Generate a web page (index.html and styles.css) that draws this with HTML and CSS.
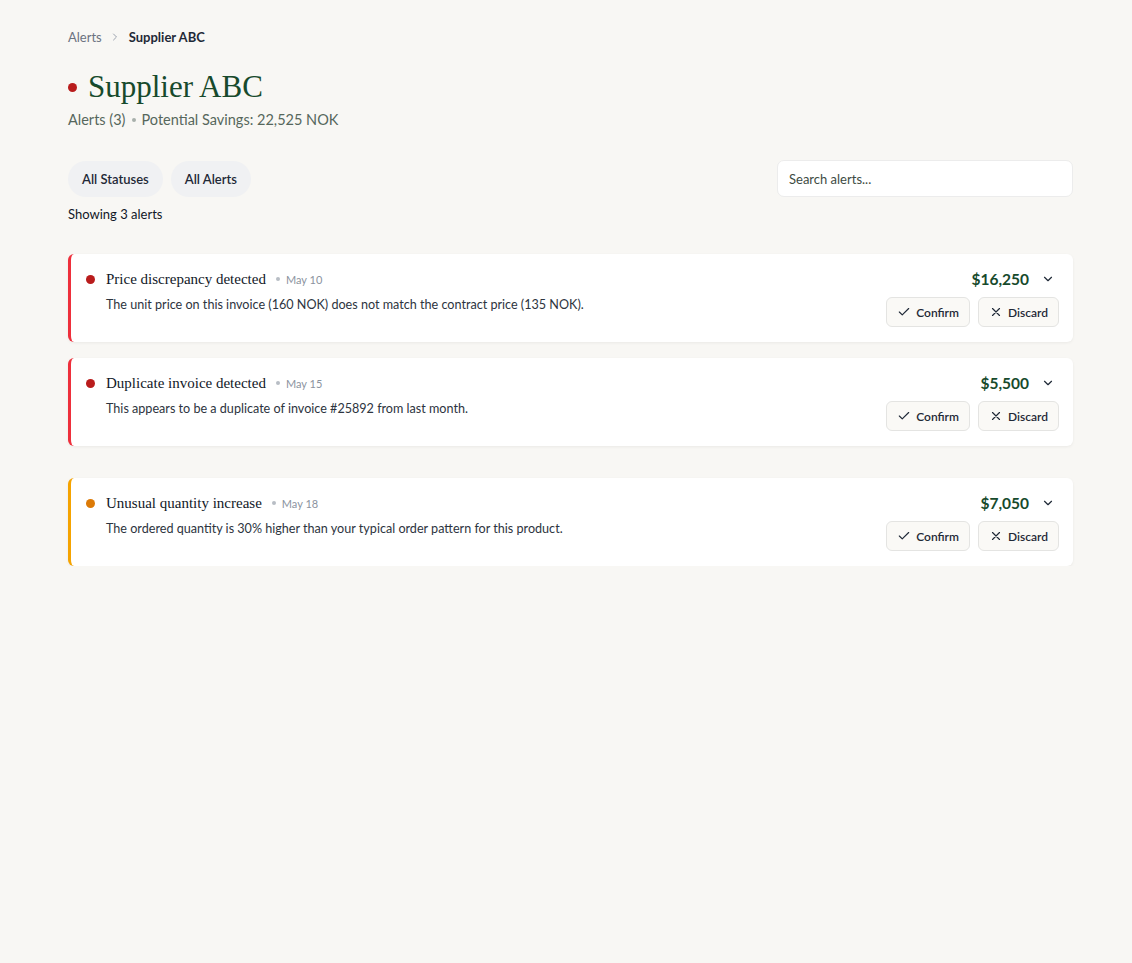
FILE: index.html
```html
<!DOCTYPE html>
<html>
<head>
<meta charset="utf-8">
<link rel="stylesheet" href="styles.css">
</head>
<body>
<div class="page">
  <nav class="crumbs">
    <span class="crumb-link">Alerts</span>
    <svg class="crumb-sep" width="12" height="12" viewBox="0 0 24 24" fill="none" stroke="currentColor" stroke-width="2" stroke-linecap="round" stroke-linejoin="round"><path d="M9 6l6 6-6 6"/></svg>
    <span class="crumb-current">Supplier ABC</span>
  </nav>

  <header class="head">
    <h1 class="title"><span class="title-dot"></span>Supplier ABC</h1>
    <p class="sub">Alerts (3) <span class="sep-dot"></span> Potential Savings: 22,525 NOK</p>
  </header>

  <div class="toolbar">
    <div class="filters">
      <button class="pill">All Statuses</button>
      <button class="pill">All Alerts</button>
    </div>
    <input class="search" type="text" placeholder="Search alerts...">
  </div>
  <p class="count">Showing 3 alerts</p>

  <div class="group">
    <div class="card card-red">
      <div class="card-main">
        <div class="card-top"><span class="dot dot-red"></span><span class="card-title">Price discrepancy detected</span><span class="meta"><span class="meta-dot"></span>May 10</span></div>
        <p class="desc">The unit price on this invoice (160 NOK) does not match the contract price (135 NOK).</p>
      </div>
      <div class="card-side">
        <div class="amount-row"><span class="amount">$16,250</span><svg class="chev" width="14" height="14" viewBox="0 0 24 24" fill="none" stroke="currentColor" stroke-width="2" stroke-linecap="round" stroke-linejoin="round"><path d="M6 9l6 6 6-6"/></svg></div>
        <div class="actions">
          <button class="btn"><svg width="14" height="14" viewBox="0 0 24 24" fill="none" stroke="currentColor" stroke-width="2" stroke-linecap="round" stroke-linejoin="round"><path d="M20 6L9 17l-5-5"/></svg>Confirm</button>
          <button class="btn"><svg width="14" height="14" viewBox="0 0 24 24" fill="none" stroke="currentColor" stroke-width="2" stroke-linecap="round" stroke-linejoin="round"><path d="M18 6L6 18M6 6l12 12"/></svg>Discard</button>
        </div>
      </div>
    </div>
    <div class="card card-red">
      <div class="card-main">
        <div class="card-top"><span class="dot dot-red"></span><span class="card-title">Duplicate invoice detected</span><span class="meta"><span class="meta-dot"></span>May 15</span></div>
        <p class="desc">This appears to be a duplicate of invoice #25892 from last month.</p>
      </div>
      <div class="card-side">
        <div class="amount-row"><span class="amount">$5,500</span><svg class="chev" width="14" height="14" viewBox="0 0 24 24" fill="none" stroke="currentColor" stroke-width="2" stroke-linecap="round" stroke-linejoin="round"><path d="M6 9l6 6 6-6"/></svg></div>
        <div class="actions">
          <button class="btn"><svg width="14" height="14" viewBox="0 0 24 24" fill="none" stroke="currentColor" stroke-width="2" stroke-linecap="round" stroke-linejoin="round"><path d="M20 6L9 17l-5-5"/></svg>Confirm</button>
          <button class="btn"><svg width="14" height="14" viewBox="0 0 24 24" fill="none" stroke="currentColor" stroke-width="2" stroke-linecap="round" stroke-linejoin="round"><path d="M18 6L6 18M6 6l12 12"/></svg>Discard</button>
        </div>
      </div>
    </div>
  </div>

  <div class="group">
    <div class="card card-orange">
      <div class="card-main">
        <div class="card-top"><span class="dot dot-orange"></span><span class="card-title">Unusual quantity increase</span><span class="meta"><span class="meta-dot"></span>May 18</span></div>
        <p class="desc">The ordered quantity is 30% higher than your typical order pattern for this product.</p>
      </div>
      <div class="card-side">
        <div class="amount-row"><span class="amount">$7,050</span><svg class="chev" width="14" height="14" viewBox="0 0 24 24" fill="none" stroke="currentColor" stroke-width="2" stroke-linecap="round" stroke-linejoin="round"><path d="M6 9l6 6 6-6"/></svg></div>
        <div class="actions">
          <button class="btn"><svg width="14" height="14" viewBox="0 0 24 24" fill="none" stroke="currentColor" stroke-width="2" stroke-linecap="round" stroke-linejoin="round"><path d="M20 6L9 17l-5-5"/></svg>Confirm</button>
          <button class="btn"><svg width="14" height="14" viewBox="0 0 24 24" fill="none" stroke="currentColor" stroke-width="2" stroke-linecap="round" stroke-linejoin="round"><path d="M18 6L6 18M6 6l12 12"/></svg>Discard</button>
        </div>
      </div>
    </div>
  </div>
</div>
</body>
</html>
```

FILE: styles.css
```css
* { box-sizing: border-box; }
html, body { margin: 0; padding: 0; }
body {
  background: #f8f7f4;
  font-family: "Lato", "Open Sans", sans-serif;
  color: #1f2937;
}
.page {
  width: 1005px;
  margin-left: 68px;
  padding-top: 28px;
}
.crumbs {
  display: flex;
  align-items: center;
  gap: 7px;
  font-size: 13px;
  height: 18px;
}
.crumb-link { color: #6b7280; }
.crumb-sep { color: #9ca3af; margin: 0 1px 0 0; }
.crumb-current { color: #1f2937; font-weight: 700; }

.head { margin-top: 23px; }
.title {
  display: flex;
  align-items: center;
  margin: 0;
  font-family: "Liberation Serif", "DejaVu Serif", serif;
  font-weight: 400;
  font-size: 31px;
  line-height: 36px;
  color: #174a2c;
}
.title-dot {
  width: 9px; height: 9px; border-radius: 50%;
  background: #b91c1c;
  margin: 0 11px 0 0;
}
.sub {
  margin: 6px 0 0;
  font-size: 14.5px;
  color: #56675c;
  display: flex;
  align-items: center;
  gap: 6px;
}
.sep-dot { width: 4px; height: 4px; border-radius: 50%; background: #a8b0ab; }

.toolbar {
  display: flex;
  justify-content: space-between;
  align-items: center;
  margin-top: 32px;
}
.filters { display: flex; gap: 8px; }
.pill {
  border: none;
  background: #f0f1f3;
  border-radius: 18px;
  height: 36px;
  padding: 0 14px;
  font-family: inherit;
  font-size: 13px;
  font-weight: 600;
  color: #1f2937;
}
.search {
  width: 296px;
  height: 37px;
  border: 1px solid #ececec;
  border-radius: 7px;
  background: #fff;
  padding: 0 11px;
  font-family: inherit;
  font-size: 13px;
  color: #1f2937;
  outline: none;
}
.search::placeholder { color: #3d4b43; }
.count {
  margin: 9px 0 0;
  font-size: 13px;
  color: #111827;
}

.group {
  margin-top: 32px;
  display: flex;
  flex-direction: column;
  gap: 16px;
}
.group + .group { margin-top: 32px; }

.card {
  background: #fff;
  border-radius: 6px;
  border-left: 3px solid #ef3340;
  box-shadow: 0 1px 3px rgba(0,0,0,0.06);
  height: 88px;
  display: flex;
  justify-content: space-between;
  padding: 16px 14px 0 15px;
}
.card-red { border-left-color: #ee2f3b; }
.card-orange { border-left-color: #f5a300; }
.card-top { display: flex; align-items: center; height: 18px; }
.dot { width: 9px; height: 9px; border-radius: 50%; margin-right: 11px; }
.dot-red { background: #b91c1c; }
.dot-orange { background: #dc7a06; }
.card-title {
  font-family: "Liberation Serif", "DejaVu Serif", serif;
  font-size: 15px;
  color: #111827;
}
.meta {
  display: flex;
  align-items: center;
  gap: 6px;
  margin-left: 10px;
  font-size: 11px;
  color: #8b93a0;
}
.meta-dot { width: 4px; height: 4px; border-radius: 50%; background: #b8bdc5; }
.desc {
  margin: 9px 0 0 20px;
  font-size: 12.6px;
  color: #2d3440;
}
.card-side {
  display: flex;
  flex-direction: column;
  align-items: flex-end;
}
.amount-row {
  display: flex;
  align-items: center;
  height: 18px;
  gap: 12px;
  padding-right: 4px;
}
.amount {
  font-size: 15.5px;
  font-weight: 700;
  color: #174a2c;
}
.chev { color: #1f2937; }
.actions {
  display: flex;
  gap: 8px;
  margin-top: 9px;
}
.btn {
  display: flex;
  align-items: center;
  gap: 5px;
  height: 30px;
  padding: 0 10px;
  background: #faf9f6;
  border: 1px solid #e4e4e2;
  border-radius: 6px;
  font-family: inherit;
  font-size: 12px;
  font-weight: 600;
  color: #1f2937;
}
```
